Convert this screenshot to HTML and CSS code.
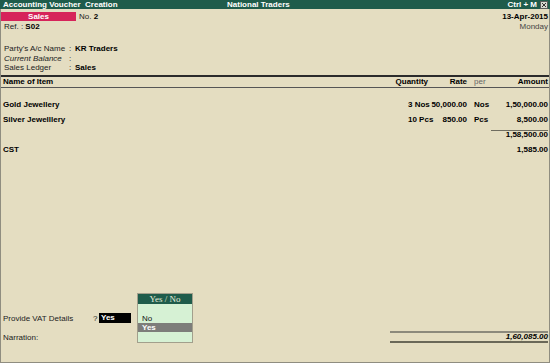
FILE: index.html
```html
<!DOCTYPE html>
<html lang="en">
<head>
	<meta charset="UTF-8">
	<title>Accounting Voucher Creation</title>
	<link rel="stylesheet" href="styles.css">
</head>
<body>
<div class="screen">
	<div class="titlebar">
		<span class="tb-left">Accounting Voucher&nbsp; Creation</span>
		<span class="tb-mid">National Traders</span>
		<span class="tb-right">Ctrl + M
			<svg class="close" width="8" height="8" viewBox="0 0 8 8">
				<rect x="0.5" y="0.5" width="7" height="7" fill="#d8d8d0" stroke="#5a5a5a"/>
				<path d="M2 2 L6 6 M6 2 L2 6" stroke="#333" stroke-width="1"/>
			</svg>
		</span>
	</div>

	<div class="head">
		<div class="head-left">
			<div class="vrow"><span class="vtype">Sales</span><span class="vno">No. <b>2</b></span></div>
			<div class="ref">Ref. : <b>S02</b></div>
		</div>
		<div class="head-right">
			<div class="vrow"><b>13-Apr-2015</b></div>
			<div class="ref day">Monday</div>
		</div>
	</div>

	<div class="party">
		<div class="prow"><span class="plbl">Party's A/c Name</span><span class="pcol">:</span><b>KR Traders</b></div>
		<div class="prow"><span class="plbl"><i>Current Balance</i></span><span class="pcol">:</span></div>
		<div class="prow"><span class="plbl">Sales Ledger</span><span class="pcol">:</span><b>Sales</b></div>
	</div>

	<!-- inventory lines -->
	<div class="irow ihead">
		<b>Name of Item</b>
		<b class="right">Quantity</b>
		<b class="rate">Rate</b>
		<span class="per muted">per</span>
		<b class="right">Amount</b>
	</div>
	<div class="ibody">
		<div class="irow">
			<b>Gold Jewellery</b>
			<b class="qty">3 Nos</b>
			<b class="rate">50,000.00</b>
			<b class="per">Nos</b>
			<b class="right">1,50,000.00</b>
		</div>
		<div class="irow">
			<b>Silver Jewelllery</b>
			<b class="qty">10 Pcs</b>
			<b class="rate">850.00</b>
			<b class="per">Pcs</b>
			<b class="right">8,500.00</b>
		</div>
		<div class="irow sub">
			<span></span><span></span><span></span><span></span>
			<b class="right subtotal">1,58,500.00</b>
		</div>
		<div class="irow cst">
			<b>CST</b>
			<span></span><span></span><span></span>
			<b class="right">1,585.00</b>
		</div>
	</div>

	<div class="footer">
		<div class="frow">
			<span class="flbl">Provide VAT Details</span><span class="q">?</span><b class="answer">Yes</b>
		</div>
		<div class="frow narr">
			<span>Narration:</span>
			<b class="grand">1,60,085.00</b>
		</div>
	</div>

	<div class="popup">
		<div class="popup-title">Yes / No</div>
		<div class="popup-body">
			<div class="opt">No</div>
			<div class="opt sel">Yes</div>
		</div>
	</div>
</div>
</body>
</html>
```

FILE: styles.css
```css
body {
  margin: 0;
  background: #e4ddc1;
}
.screen {
  position: relative;
  width: 550px;
  height: 363px;
  box-sizing: border-box;
  background: #e4ddc1;
  border: 1px solid #8f8d80;
  border-top: none;
  display: flex;
  flex-direction: column;
  font: 8px "Liberation Sans", Arial, sans-serif;
  color: #222;
}
b {
  color: #000;
}

/* title bar */
.titlebar {
  height: 9px;
  margin: 0 -1px;
  padding: 0 2px 0 3px;
  display: flex;
  align-items: center;
  background: #1f5c4b;
  color: #fff;
  font-weight: bold;
  line-height: 9px;
}
.tb-left {
  width: 224px;
}
.tb-mid {
  flex: 1;
}
.tb-right {
  display: flex;
  align-items: center;
  gap: 3px;
}
.close {
  display: block;
}

/* voucher head */
.head {
  display: flex;
  justify-content: space-between;
  padding: 3px 1px 0 0;
}
.vrow {
  height: 10px;
  line-height: 9px;
  display: flex;
}
.vtype {
  width: 75px;
  height: 9px;
  background: #d6245a;
  color: #fff;
  font-weight: bold;
  text-align: center;
}
.vno {
  margin-left: 3px;
}
.ref {
  line-height: 10px;
  padding-left: 3px;
}
.head-right {
  text-align: right;
}
.head-right .vrow {
  justify-content: flex-end;
}
.day {
  color: #444;
}

.party {
  margin-top: 12px;
  padding-left: 3px;
}
.prow {
  display: flex;
  line-height: 9.5px;
}
.plbl {
  width: 65px;
}
.pcol {
  width: 6px;
}

/* items */
.irow {
  display: grid;
  grid-template-columns: 1fr 50px 42px 21px 57px;
  padding: 0 1px 0 2px;
  line-height: 15px;
  white-space: nowrap;
}
.ihead {
  margin-top: 2px;
  line-height: 10px;
  border-top: 2px solid #2b2b2b;
  border-bottom: 1px solid #555;
}
.right {
  text-align: right;
}
.rate {
  text-align: right;
  padding-right: 3px;
}
.per {
  padding-left: 4px;
}
.muted {
  color: #666;
}
.qty {
  padding-left: 30px;
}
.ibody {
  margin-top: 9px;
}
.sub {
  margin-top: 3px;
  line-height: 6px;
}
.subtotal {
  border-top: 1px solid #6f6d60;
  padding-top: 1px;
}
.cst {
  margin-top: 4px;
}

/* footer */
.footer {
  margin-top: auto;
  padding: 0 1px 19px 2px;
}
.frow {
  display: flex;
  align-items: center;
  height: 10px;
}
.flbl {
  width: 90px;
}
.q {
  width: 6px;
}
.answer {
  width: 30px;
  height: 10px;
  line-height: 10px;
  padding-left: 2px;
  background: #000;
  color: #fff;
}
.narr {
  margin-top: 8px;
  height: 12px;
  justify-content: space-between;
}
.grand {
  width: 158px;
  box-sizing: border-box;
  line-height: 8px;
  text-align: right;
  font-style: italic;
  border-top: 2px solid #8c8a7c;
  border-bottom: 2px solid #6a6858;
}

/* Yes / No list */
.popup {
  position: absolute;
  left: 136px;
  top: 293px;
  width: 56px;
  height: 50px;
  box-sizing: border-box;
  border: 1px solid #a29f8c;
  background: #d6f1d4;
}
.popup-title {
  height: 10px;
  line-height: 10px;
  background: #1f5c4b;
  color: #e6eedc;
  font: 9px "Liberation Serif", "Times New Roman", serif;
  text-align: center;
}
.popup-body {
  padding-top: 10px;
}
.opt {
  line-height: 9px;
  padding-left: 4px;
  color: #111;
}
.opt.sel {
  background: #7d7d7a;
  color: #fff;
  font-weight: bold;
}
```
